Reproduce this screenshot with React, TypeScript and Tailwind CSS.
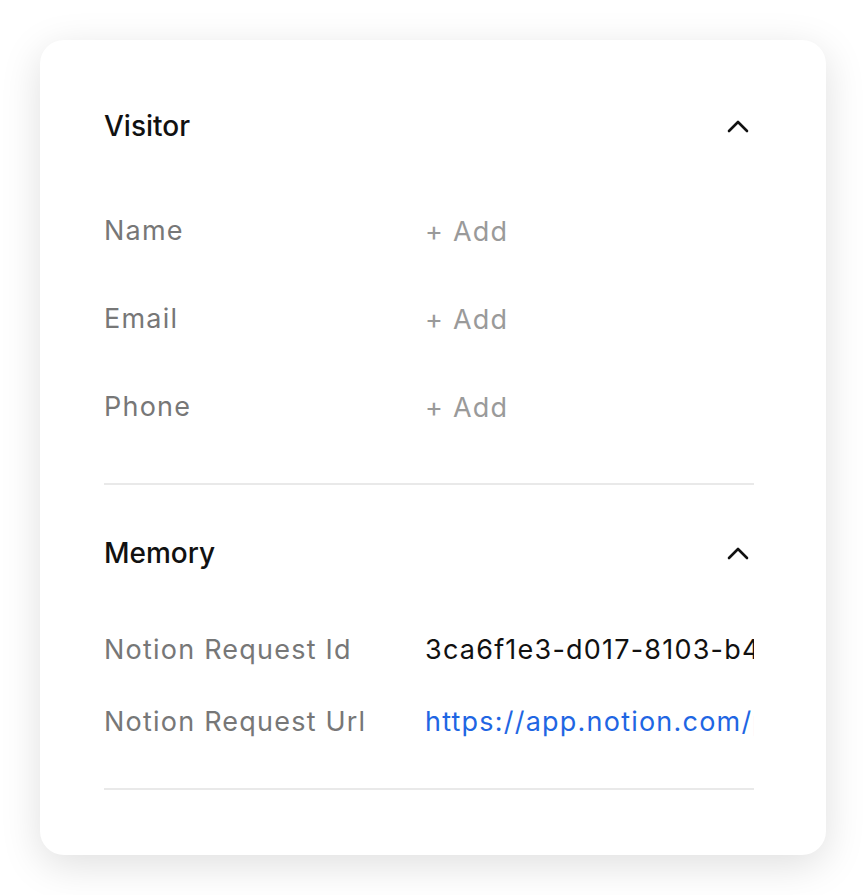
import React from "react";

type Field = { label: string; value?: string; href?: boolean };

const VISITOR: Field[] = [{ label: "Name" }, { label: "Email" }, { label: "Phone" }];

const MEMORY: Field[] = [
  { label: "Notion Request Id", value: "3ca6f1e3-d017-8103-b4c2-00a9e1f1b7d3" },
  { label: "Notion Request Url", value: "https://app.notion.com/p/3ca6f1e3d0178103", href: true },
];

function Chevron() {
  return (
    <svg width="22" height="14" viewBox="0 0 22 14" fill="none" className="mr-[5px]">
      <polyline
        points="2,12 11,3 20,12"
        stroke="#111"
        strokeWidth="2.6"
        strokeLinecap="round"
        strokeLinejoin="round"
      />
    </svg>
  );
}

function SectionHeader({ title }: { title: string }) {
  return (
    <div className="flex h-[56px] items-center justify-between">
      <h2 className="text-[28px] font-medium leading-none text-[#111]">{title}</h2>
      <Chevron />
    </div>
  );
}

export default function App() {
  return (
    <div
      className="relative min-h-[895px] w-[866px] bg-white pt-[40px] pl-[40px]"
      style={{ fontFamily: "Inter, 'Liberation Sans', sans-serif" }}
    >
      {/* faint arc peeking out behind the panel */}
      <svg width="10" height="34" viewBox="0 0 10 34" className="absolute left-[77px] top-[336px]">
        <path d="M2 2 Q8 17 2 32" stroke="#dcdcdc" strokeWidth="1.5" fill="none" />
      </svg>

      <div className="relative w-[786px] rounded-[24px] bg-white pt-[58px] pb-[65px] pl-[64px] pr-[72px] shadow-[0_10px_40px_rgba(0,0,0,0.13)]">
        <SectionHeader title="Visitor" />
        <div className="mt-[33px]">
          {VISITOR.map((f) => (
            <div key={f.label} className="flex h-[88px] items-center">
              <span className="w-[321px] shrink-0 text-[27px] tracking-[0.045em] text-[#777]">
                {f.label}
              </span>
              <button className="mt-[3px] text-[27px] tracking-[0.045em] text-[#9a9a9a]">+ Add</button>
            </div>
          ))}
        </div>
        <div className="mt-[32px] h-[2px] bg-[#e9e9e9]" />

        <div className="mt-[40px]">
          <SectionHeader title="Memory" />
        </div>
        <div className="mt-[33px]">
          {MEMORY.map((f) => (
            <div key={f.label} className="flex h-[72px] items-center">
              <span className="w-[321px] shrink-0 text-[27px] tracking-[0.045em] text-[#777]">
                {f.label}
              </span>
              <span
                className={
                  f.href
                    ? "min-w-0 flex-1 overflow-hidden whitespace-nowrap text-[27px] tracking-[0.045em] text-[#1f66e3]"
                    : "min-w-0 flex-1 overflow-hidden whitespace-nowrap text-[27px] tracking-[0.045em] text-[#111]"
                }
              >
                {f.value}
              </span>
            </div>
          ))}
        </div>
        <div className="mt-[30px] h-[2px] bg-[#e9e9e9]" />
      </div>
    </div>
  );
}
